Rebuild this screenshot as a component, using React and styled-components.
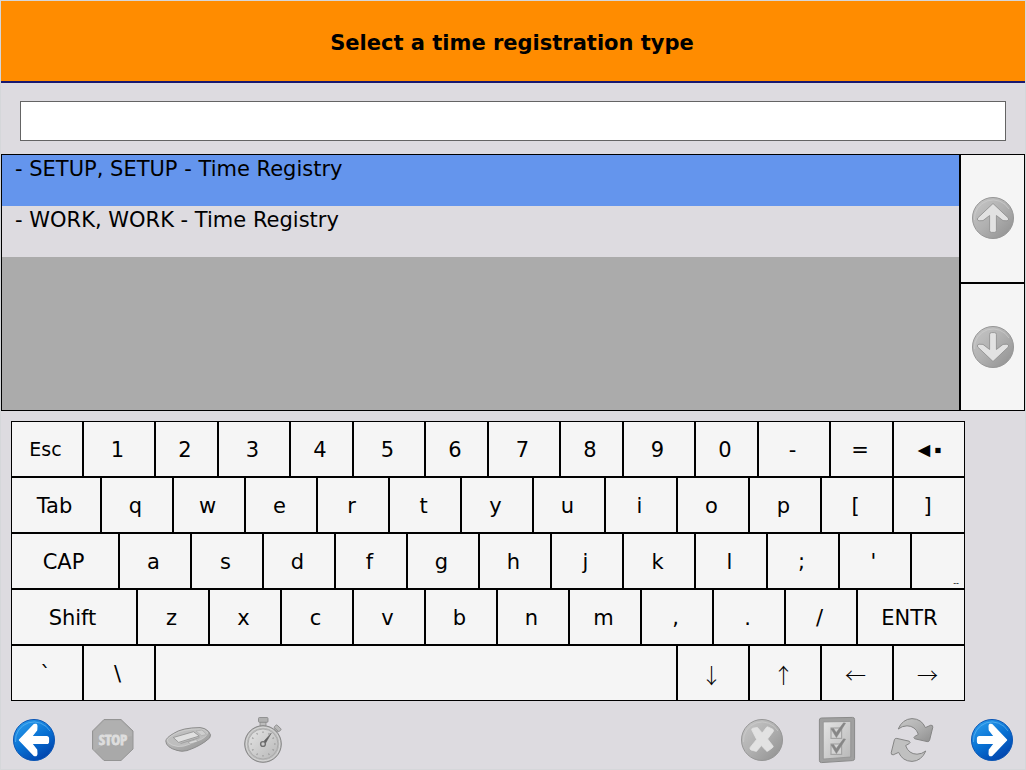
import React, { useState } from "react"
import styled, { createGlobalStyle, ThemeProvider } from "styled-components"

const theme = {
  colors: {
    page: "#dddbe0",
    header: "#ff8c00",
    headerLine: "#191970",
    selected: "#6495ed",
    empty: "#ababab",
    key: "#f5f5f5",
    line: "#000000",
  },
  font: `Verdana, "DejaVu Sans", sans-serif`,
}

const GlobalStyle = createGlobalStyle`
  * {
    box-sizing: border-box;
  }

  body {
    margin: 0;
    background: ${theme.colors.page};
    font-family: ${theme.font};
    color: #000000;
  }
`

const Page = styled.div`
  display: flex;
  flex-direction: column;
  min-height: 100vh;
  border: 1px solid #d5d7da;
  background: ${props => props.theme.colors.page};
`

const Header = styled.header`
  display: flex;
  align-items: center;
  justify-content: center;
  height: 82px;
  padding: 3px 2px 0 0;
  background: ${props => props.theme.colors.header};
  border-bottom: 2px solid ${props => props.theme.colors.headerLine};
`

const Title = styled.h1`
  margin: 0;
  font-size: 21px;
  line-height: 26px;
  font-weight: bold;
`

const SearchRow = styled.div`
  padding: 18px 19px 13px;
`

const SearchInput = styled.input`
  display: block;
  width: 100%;
  height: 40px;
  padding: 0 10px;
  border: 1px solid #646464;
  border-radius: 0;
  background: #ffffff;
  font-family: inherit;
  font-size: 21px;
  outline: none;
`

const ListArea = styled.div`
  display: flex;
  flex: 1;
  min-height: 257px;
`

const List = styled.ul`
  flex: 1;
  margin: 0;
  padding: 0;
  list-style: none;
  border: 1px solid ${props => props.theme.colors.line};
  background: ${props => props.theme.colors.empty};
`

const ListItem = styled.button`
  display: flex;
  align-items: flex-start;
  width: 100%;
  height: 51px;
  padding: 0 13px;
  border: none;
  background: ${props =>
    props.$selected ? props.theme.colors.selected : props.theme.colors.page};
  color: inherit;
  font-family: inherit;
  font-size: 21px;
  line-height: 28px;
  text-align: left;
`

const Scroller = styled.div`
  display: flex;
  flex-direction: column;
  width: 65px;
`

const ScrollButton = styled.button`
  display: flex;
  flex: 1;
  align-items: center;
  justify-content: center;
  padding: 0;
  border: 1px solid ${props => props.theme.colors.line};
  background: ${props => props.theme.colors.key};
`

const Keyboard = styled.div`
  display: grid;
  grid-template-columns: repeat(106, minmax(0, 1fr));
  grid-auto-rows: 56px;
  margin: 10px 60px 0 10px;
`

const Key = styled.button`
  grid-column: span ${props => props.$span};
  display: flex;
  align-items: center;
  justify-content: center;
  padding: 2px 3px 0 0;
  border: 1px solid ${props => props.theme.colors.line};
  border-radius: 0;
  background: ${props => props.theme.colors.key};
  color: inherit;
  font-family: inherit;
  font-size: 21px;
  line-height: 26px;
`

const SmallKey = styled(Key)`
  padding-top: 0;
  font-size: 19px;
`

const TinyKey = styled(Key)`
  align-items: flex-end;
  justify-content: flex-end;
  padding-right: 5px;
  font-size: 8px;
  line-height: 8px;
`

const BackspaceKey = styled(Key)`
  font-family: "Liberation Sans", sans-serif;
`

const ArrowKey = styled(Key)`
  font-family: "Noto Sans CJK JP", sans-serif;
  font-weight: 300;
`

const Footer = styled.footer`
  display: flex;
  align-items: center;
  justify-content: space-between;
  padding: 17px 11px 7px;
`

const FooterSide = styled.div`
  display: flex;
  gap: ${props => props.$gap}px;
`

const Tools = styled.div`
  display: flex;
  gap: 31px;
`

const IconButton = styled.button`
  padding: 0;
  border: none;
  background: none;
`

const Icon = styled.svg`
  display: block;
  width: 44px;
  height: 44px;
  overflow: visible;
`

const Gradients = () => (
  <defs>
    <linearGradient id="grey" x1="0" y1="0" x2="1" y2="1">
      <stop offset="0" stopColor="#c8c8c8" />
      <stop offset="0.5" stopColor="#b0b0b0" />
      <stop offset="1" stopColor="#8e8e8e" />
    </linearGradient>
    <linearGradient id="blue" x1="0.2" y1="0" x2="0.8" y2="1">
      <stop offset="0" stopColor="#2a9cec" />
      <stop offset="0.5" stopColor="#0870d2" />
      <stop offset="1" stopColor="#003ea8" />
    </linearGradient>
    <linearGradient id="light" x1="0" y1="0" x2="1" y2="1">
      <stop offset="0" stopColor="#e4e4e4" />
      <stop offset="1" stopColor="#b8b8b8" />
    </linearGradient>
  </defs>
)

const ARROW =
  "M22 7.5 L37.3 22 Q38.4 24.6 36 24.8 L32 24.6 L25.4 19.5 V34.5 Q25.4 36.4 23.5 36.4 H20.5 Q18.6 36.4 18.6 34.5 V19.5 L12 24.6 L8 24.8 Q5.6 24.6 6.7 22 Z"

const ArrowIcon = ({ angle, blue }) => (
  <Icon viewBox="0 0 44 44" aria-hidden="true">
    <Gradients />
    <circle
      cx="22"
      cy="22"
      r="20.5"
      fill={blue ? "url(#blue)" : "url(#grey)"}
      stroke={blue ? "#0a55b4" : "#969696"}
    />
    <path
      d="M3.5 24 A18.6 18.6 0 0 1 38 13"
      fill="none"
      stroke={blue ? "#6dbdf5" : "#d0d0d0"}
      strokeOpacity="0.6"
    />
    <path
      d={ARROW}
      transform={`rotate(${angle} 22 22)`}
      fill={blue ? "#ffffff" : "#e2e2e2"}
      stroke={blue ? "#ffffff" : "#8b8b8b"}
      strokeWidth={blue ? "1.4" : "0.8"}
      strokeLinejoin="round"
    />
  </Icon>
)

const StopIcon = () => (
  <Icon viewBox="0 0 44 44" aria-hidden="true">
    <path
      d="M14 1.5 H31 L43 13 V31 L31 42.5 H14 L2.5 31 V13 Z"
      fill="#a9a9a9"
      stroke="#949494"
    />
    <path d="M14.4 2.6 H30.6 L41.9 13.4 V18 Q22 20 3.6 33 V13.4 Z" fill="#b0b0b0" />
    <text
      x="23"
      y="27"
      textAnchor="middle"
      fontFamily="'Open Sans Condensed', 'Roboto Condensed', 'Liberation Sans', sans-serif"
      fontWeight="bold"
      fontSize="15"
      fill="#dedede"
      stroke="#dedede"
      strokeWidth="0.8"
    >
      STOP
    </text>
  </Icon>
)

const TerminalIcon = () => (
  <Icon viewBox="0 0 44 44" aria-hidden="true">
    <path
      d="M0.8 23 Q1 20 8.3 15.6 Q17 9.6 35 9.6 Q40 9.8 43.5 13.4 Q47 17 44.6 20 Q36 28 22 32.6 Q17 34 12 32.4 Q1 29.4 0.8 23 Z"
      fill="url(#grey)"
      stroke="#8c8c8c"
    />
    <path
      d="M2 22 Q3 19.5 9 16.4 Q18 11 35 10.8 Q39.4 11 42.4 14 Q43 17.5 37 21 Q28 25.6 19 28 Q13 29.6 7 27 Q2.6 25 2 22 Z"
      fill="#bebebe"
      stroke="#d4d4d4"
      strokeWidth="0.7"
    />
    <path d="M8.3 19.5 L28.5 13.7 L34.3 18 L13.6 24.4 Z" fill="#e0e0e0" stroke="#8e8e8e" strokeWidth="0.8" />
    <path d="M31 13 L37 12 L41.5 16.6 L36.5 17.6 Z" fill="#cecece" stroke="#a8a8a8" strokeWidth="0.6" />
    <path d="M15.5 25.6 L34.5 19.6" fill="none" stroke="#a0a0a0" />
    <path d="M23 24 L31 21.6 L33.2 23.6 L25.6 26 Z" fill="#d8d8d8" stroke="#989898" strokeWidth="0.6" />
  </Icon>
)

const ticks = Array.from({ length: 12 }, (_, i) => i * 30)

const StopwatchIcon = () => (
  <Icon viewBox="0 0 44 44" aria-hidden="true">
    <rect x="20" y="3.5" width="6" height="5" fill="#bcbcbc" stroke="#858585" strokeWidth="0.7" />
    <rect x="18.5" y="-0.5" width="9.5" height="4.8" rx="1" fill="#b0b0b0" stroke="#858585" strokeWidth="0.8" />
    <g transform="rotate(43 23 26)">
      <rect x="21" y="5.4" width="4" height="3" fill="#b8b8b8" stroke="#858585" strokeWidth="0.6" />
      <rect x="19.6" y="2.6" width="6.8" height="3.8" rx="1" fill="#b8b8b8" stroke="#858585" strokeWidth="0.8" />
    </g>
    <circle cx="23" cy="26" r="18.3" fill="#bababa" stroke="#858585" />
    <circle cx="23" cy="26" r="16.8" fill="none" stroke="#d8d8d8" />
    <circle cx="23" cy="26" r="15" fill="url(#light)" stroke="#a4a4a4" strokeWidth="0.8" />
    {ticks.map(angle => (
      <path
        key={angle}
        d="M23 13.4 V15"
        stroke="#949494"
        transform={`rotate(${angle} 23 26)`}
      />
    ))}
    <path d="M22.2 25.2 L31.2 15.2 L24.6 26.8 Z" fill="#606060" stroke="#606060" strokeWidth="0.6" />
    <circle cx="23" cy="26" r="2.4" fill="#cccccc" stroke="#707070" strokeWidth="1.4" />
  </Icon>
)

const CancelIcon = () => (
  <Icon viewBox="0 0 44 44" aria-hidden="true">
    <circle cx="22" cy="22" r="20.5" fill="url(#grey)" stroke="#969696" />
    <path d="M3.5 24 A18.6 18.6 0 0 1 38 13" fill="none" stroke="#cccccc" strokeOpacity="0.7" />
    <path
      d="M11.8 12 Q11.4 10.6 12.8 10.2 L17.4 9.4 L22.2 15 L26.4 9.4 Q27.4 8.4 28.6 9.2 L33 11.4 Q34 12.4 33.2 13.6 L27.6 21 L33 28 Q33.6 29 32.4 29.8 L28 33 Q26.8 33.8 26 32.6 L21.4 27.6 L16.4 33.4 L11 32 Q9.4 31 10.2 29.4 L16.6 21.4 Z"
      fill="#e2e2e2"
      stroke="#e2e2e2"
      strokeWidth="0.8"
    />
  </Icon>
)

const ChecklistIcon = () => (
  <Icon viewBox="0 0 44 44" aria-hidden="true">
    <path
      d="M6.5 0 L37.5 -0.6 Q39.6 -0.6 39.6 1.5 V40.5 Q39.6 42.4 37.5 42.6 L6.5 44.6 Q4.4 44.6 4.4 42.5 V2 Q4.4 0 6.5 0 Z"
      fill="#a0a0a0"
      stroke="#8a8a8a"
    />
    <path d="M8.3 4 L35.7 3.4 V39 L8.3 41 Z" fill="url(#light)" stroke="#8e8e8e" strokeWidth="0.7" />
    {[0, 16].map(y => (
      <g key={y} transform={`translate(0 ${y})`}>
        <rect x="16" y="10" width="10.6" height="10.4" fill="#d4d4d4" stroke="#a4a4a4" strokeWidth="1.2" />
        <path
          d="M16 10.8 L18.6 10.6 L21.2 14.6 L28.6 4.8 L30.6 5.2 L21.4 19.6 Z"
          fill="#868686"
          stroke="#868686"
          strokeWidth="0.5"
        />
      </g>
    ))}
  </Icon>
)

const RefreshIcon = () => (
  <Icon viewBox="0 0 44 44" aria-hidden="true">
    {[0, 180].map(angle => (
      <path
        key={angle}
        d="M8.2 11 Q12.5 1 22 0.6 Q31.5 0.8 35.4 9.6 L40.8 7.2 Q43 7 42.8 9.2 L39.6 22.2 Q39 24 37.2 23.6 L24.8 20.8 Q23 19.6 24.8 18.4 L28.4 16.4 Q25.4 8 17 7.8 Q12 8 8.2 11 Z"
        transform={`rotate(${angle} 22 22)`}
        fill={angle ? "#c0c0c0" : "url(#grey)"}
        stroke="#858585"
        strokeLinejoin="round"
      />
    ))}
  </Icon>
)

// spans are in 1/106ths of the keyboard width
const key = (label, span = 8, extra = {}) => ({ label, span, ...extra })

const rows = [
  [
    key("Esc", 8, { as: SmallKey }),
    ..."1234567890-=".split("").map((c, i) => key(c, i % 2 ? 7 : 8)),
    key("◄▪", 8, { name: "Backspace", as: BackspaceKey }),
  ],
  [key("Tab", 10), ..."qwertyuiop[]".split("").map(c => key(c))],
  [
    key("CAP", 12),
    ..."asdfghjkl;'".split("").map(c => key(c)),
    key("--", 6, { as: TinyKey }),
  ],
  [key("Shift", 14), ..."zxcvbnm,./".split("").map(c => key(c)), key("ENTR", 12)],
  [
    key("`"),
    key("\\"),
    key("", 58, { name: "Space" }),
    ..."↓↑←→".split("").map(c => key(c, 8, { as: ArrowKey })),
  ],
]

const items = ["- SETUP, SETUP - Time Registry", "- WORK, WORK - Time Registry"]

const App = () => {
  const [selected, setSelected] = useState(0)
  const [text, setText] = useState("")

  const move = step =>
    setSelected(current => Math.max(0, Math.min(items.length - 1, current + step)))

  const press = ({ label, name }) => {
    if (name === "Backspace") setText(value => value.slice(0, -1))
    else if (name === "Space") setText(value => value + " ")
    else if (label.length === 1 && !"↓↑←→".includes(label))
      setText(value => value + label)
  }

  return (
    <ThemeProvider theme={theme}>
      <GlobalStyle />
      <Page>
        <Header>
          <Title>Select a time registration type</Title>
        </Header>
        <SearchRow>
          <SearchInput
            type="text"
            aria-label="Time registration type"
            value={text}
            onChange={e => setText(e.target.value)}
          />
        </SearchRow>
        <ListArea>
          <List>
            {items.map((item, i) => (
              <li key={item}>
                <ListItem
                  type="button"
                  $selected={i === selected}
                  aria-pressed={i === selected}
                  onClick={() => setSelected(i)}
                >
                  {item}
                </ListItem>
              </li>
            ))}
          </List>
          <Scroller>
            <ScrollButton type="button" aria-label="Up" onClick={() => move(-1)}>
              <ArrowIcon angle={0} />
            </ScrollButton>
            <ScrollButton type="button" aria-label="Down" onClick={() => move(1)}>
              <ArrowIcon angle={180} />
            </ScrollButton>
          </Scroller>
        </ListArea>
        <Keyboard>
          {rows.flat().map(k => {
            const KeyButton = k.as || Key
            return (
              <KeyButton
                key={k.name || k.label}
                type="button"
                aria-label={k.name}
                $span={k.span}
                onClick={() => press(k)}
              >
                {k.label}
              </KeyButton>
            )
          })}
        </Keyboard>
        <Footer>
          <FooterSide $gap={34}>
            <IconButton type="button" aria-label="Back">
              <ArrowIcon angle={-90} blue />
            </IconButton>
            <Tools>
              <IconButton type="button" aria-label="Stop">
                <StopIcon />
              </IconButton>
              <IconButton type="button" aria-label="Terminal">
                <TerminalIcon />
              </IconButton>
              <IconButton type="button" aria-label="Timer">
                <StopwatchIcon />
              </IconButton>
            </Tools>
          </FooterSide>
          <FooterSide $gap={36}>
            <Tools>
              <IconButton type="button" aria-label="Cancel">
                <CancelIcon />
              </IconButton>
              <IconButton type="button" aria-label="Checklist">
                <ChecklistIcon />
              </IconButton>
              <IconButton type="button" aria-label="Refresh">
                <RefreshIcon />
              </IconButton>
            </Tools>
            <IconButton type="button" aria-label="Next">
              <ArrowIcon angle={90} blue />
            </IconButton>
          </FooterSide>
        </Footer>
      </Page>
    </ThemeProvider>
  )
}

export default App
